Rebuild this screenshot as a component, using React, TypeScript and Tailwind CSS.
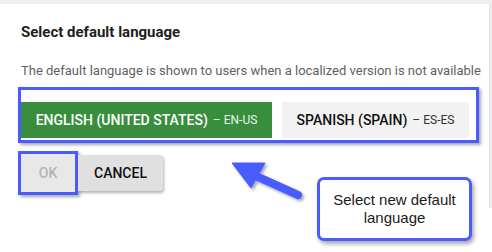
/**
 * Default language dialog — annotated screenshot with a callout.
 */

const BLUE = '#4a5cff';

function Arrow() {
    return (
        <svg className="absolute left-[226px] top-[158px]" width="84" height="46" viewBox="0 0 84 46">
            <defs>
                <filter id="sh" x="-20%" y="-20%" width="150%" height="150%">
                    <feDropShadow dx="2" dy="2" stdDeviation="1.5" floodColor="#000" floodOpacity="0.35" />
                </filter>
            </defs>
            <g filter="url(#sh)" fill={BLUE} stroke={BLUE}>
                <line x1="30" y1="18" x2="72" y2="37" strokeWidth="8" strokeLinecap="round" />
                <polygon points="6,5 39,5 25,30" strokeWidth="1" strokeLinejoin="round" />
            </g>
        </svg>
    );
}

export default function App() {
    return (
        <div className="relative w-[492px] h-[252px] bg-white overflow-hidden font-['Roboto',sans-serif]">
            <div className="h-1 bg-[#eeeeee]" />
            <div className="flex">
                <div className="flex-1 h-[204px] pl-[21px] pt-[18px]">
                    <h2 className="text-[15px] leading-5 font-bold text-[#212121]">Select default language</h2>
                    <p className="mt-5 text-[13px] leading-[18px] text-[#5f5f5f] whitespace-nowrap">
                        The default language is shown to users when a localized version is not available
                    </p>

                    <div className="mt-[7px] -ml-[3px] w-[461px] border-[3px] border-[#4a5cff] pt-3 pb-[2px] pr-[7px] flex gap-[10px] shadow-[2px_2px_3px_rgba(0,0,0,0.35)]">
                        <button className="w-[251px] h-9 bg-[#388e3c] flex items-center justify-center gap-[5px] text-white">
                            <span className="text-[14px] font-medium">ENGLISH (UNITED STATES)</span>
                            <span className="text-[12px] text-[#e8f5e9]">– EN-US</span>
                        </button>
                        <button className="flex-1 h-9 bg-[#f2f2f2] flex items-center justify-center gap-[5px] text-[#111]">
                            <span className="text-[14px] font-medium">SPANISH (SPAIN)</span>
                            <span className="text-[12px] text-[#333]">– ES-ES</span>
                        </button>
                    </div>

                    <div className="mt-2 -ml-[3px] flex items-center">
                        <div className="w-[60px] h-[44px] border-[3px] border-[#4a5cff] bg-[#e8e8e8] flex items-center justify-center shadow-[2px_2px_3px_rgba(0,0,0,0.35)]">
                            <span className="text-[14px] font-medium text-[#b3b3b3]">OK</span>
                        </div>
                        <button className="w-[85px] h-9 bg-[#e0e0e0] rounded-r-[3px] flex items-center justify-center text-[14px] font-medium text-[#111] shadow-[1px_2px_3px_rgba(0,0,0,0.3)]">
                            CANCEL
                        </button>
                    </div>
                </div>
                <div className="w-[3px] h-[204px] bg-[#ededed] border-l border-[#e2e2e2]" />
            </div>

            <Arrow />

            <div className="absolute left-[317px] top-[177px] w-[155px] h-[64px] rounded-[7px] border-[3px] border-[#4a5cff] bg-white flex items-center justify-center text-center shadow-[2px_3px_4px_rgba(0,0,0,0.35)]">
                <p className="font-['Liberation_Sans',sans-serif] text-[15px] leading-[18px] text-[#1a1a1a]">
                    Select new default<br />language
                </p>
            </div>
        </div>
    );
}
